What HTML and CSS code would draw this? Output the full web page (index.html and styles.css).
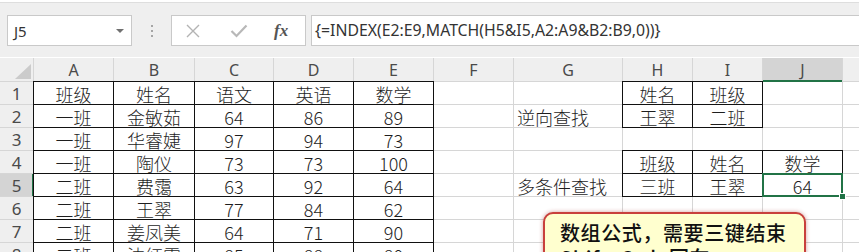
FILE: index.html
```html
<!DOCTYPE html>
<html lang="zh">
<head>
<meta charset="utf-8">
<link rel="stylesheet" href="styles.css">
</head>
<body>
<div class="toolbar">
  <div class="namebox"><span class="ref">J5</span><span class="caret"></span></div>
  <div class="grip"><i></i><i></i><i></i></div>
  <div class="btns">
    <svg class="ico" width="16" height="16" viewBox="0 0 16 16"><path d="M2 2 L14 14 M14 2 L2 14" stroke="#b3b3b3" stroke-width="1.4" fill="none"/></svg>
    <svg class="ico" width="18" height="14" viewBox="0 0 18 14"><path d="M1.5 7 L6.5 12 L16.5 1.5" stroke="#b8b8b8" stroke-width="2.2" fill="none"/></svg>
    <span class="fx">fx</span>
  </div>
  <div class="formula">{=INDEX(E2:E9,MATCH(H5&amp;I5,A2:A9&amp;B2:B9,0))}</div>
</div>
<div class="sheet">
  <div class="h corner"><span class="tri"></span></div>
  <div class="h">A</div><div class="h">B</div><div class="h">C</div><div class="h">D</div><div class="h">E</div><div class="h">F</div><div class="h">G</div><div class="h">H</div><div class="h">I</div><div class="h hl-col">J</div><div class="h"></div>

  <div class="h rh">1</div>
  <div class="c b">班级</div><div class="c b">姓名</div><div class="c b">语文</div><div class="c b">英语</div><div class="c b">数学</div>
  <div class="c"></div><div class="c"></div><div class="c b">姓名</div><div class="c b">班级</div><div class="c"></div><div class="c"></div>

  <div class="h rh">2</div>
  <div class="c b">一班</div><div class="c b">金敏茹</div><div class="c b">64</div><div class="c b">86</div><div class="c b">89</div>
  <div class="c"></div><div class="c l">逆向查找</div><div class="c b">王翠</div><div class="c b">二班</div><div class="c"></div><div class="c"></div>

  <div class="h rh">3</div>
  <div class="c b">一班</div><div class="c b">华睿婕</div><div class="c b">97</div><div class="c b">94</div><div class="c b">73</div>
  <div class="c"></div><div class="c"></div><div class="c"></div><div class="c"></div><div class="c"></div><div class="c"></div>

  <div class="h rh">4</div>
  <div class="c b">一班</div><div class="c b">陶仪</div><div class="c b">73</div><div class="c b">73</div><div class="c b">100</div>
  <div class="c"></div><div class="c"></div><div class="c b">班级</div><div class="c b">姓名</div><div class="c b">数学</div><div class="c"></div>

  <div class="h rh hl-row">5</div>
  <div class="c b">二班</div><div class="c b">费霭</div><div class="c b">63</div><div class="c b">92</div><div class="c b">64</div>
  <div class="c"></div><div class="c l">多条件查找</div><div class="c b">三班</div><div class="c b">王翠</div><div class="c sel">64</div><div class="c"></div>

  <div class="h rh">6</div>
  <div class="c b">二班</div><div class="c b">王翠</div><div class="c b">77</div><div class="c b">84</div><div class="c b">62</div>
  <div class="c"></div><div class="c"></div><div class="c"></div><div class="c"></div><div class="c"></div><div class="c"></div>

  <div class="h rh">7</div>
  <div class="c b">二班</div><div class="c b">姜凤美</div><div class="c b">64</div><div class="c b">71</div><div class="c b">90</div>
  <div class="c"></div><div class="c"></div><div class="c"></div><div class="c"></div><div class="c"></div><div class="c"></div>

  <div class="h rh">8</div>
  <div class="c b">二班</div><div class="c b">沈红霞</div><div class="c b">85</div><div class="c b">88</div><div class="c b">80</div>
  <div class="c"></div><div class="c"></div><div class="c"></div><div class="c"></div><div class="c"></div><div class="c"></div>
</div>
<div class="note">数组公式，需要三键结束<br>Shift+Ctrl+回车</div>
</body>
</html>
```
FILE: styles.css
```css
html, body {
  margin: 0;
  padding: 0;
  width: 859px;
  height: 252px;
  overflow: hidden;
  background: #fff;
}
body {
  position: relative;
  font-family: "Noto Sans CJK SC", "Noto Sans", sans-serif;
}
.toolbar {
  height: 55px;
  box-sizing: border-box;
  background: #efefef;
  border-top: 1px solid #dedede;
  margin-top: 2px;
  display: flex;
  align-items: flex-start;
  padding-top: 12px;
}
.namebox {
  margin-left: 7px;
  width: 125px;
  height: 31px;
  box-sizing: border-box;
  background: #fff;
  border: 1px solid #c9c9c9;
  display: flex;
  align-items: center;
  justify-content: space-between;
  padding: 0 7px 0 6px;
}
.ref {
  font-family: "Noto Sans", sans-serif;
  font-size: 15px;
  color: #333;
}
.caret {
  width: 0;
  height: 0;
  border-left: 4px solid transparent;
  border-right: 4px solid transparent;
  border-top: 4px solid #707070;
}
.grip {
  width: 39px;
  height: 31px;
  display: flex;
  flex-direction: column;
  align-items: center;
  justify-content: center;
  gap: 3px;
}
.grip i {
  display: block;
  width: 2px;
  height: 2px;
  background: #a5a5a5;
}
.btns {
  width: 135px;
  height: 31px;
  box-sizing: border-box;
  background: #fff;
  border: 1px solid #c9c9c9;
  display: flex;
  align-items: center;
  padding-left: 13px;
}
.ico { display: block; }
.btns .ico:first-child { margin-right: 29px; }
.btns .ico:nth-child(2) { margin-right: 26px; }
.fx {
  font-family: "Liberation Serif", serif;
  font-style: italic;
  font-weight: bold;
  font-size: 17px;
  color: #555;
}
.formula {
  flex: 1;
  margin-left: 5px;
  margin-right: -2px;
  height: 31px;
  box-sizing: border-box;
  background: #fff;
  border: 1px solid #c9c9c9;
  font-family: "Noto Sans", sans-serif;
  font-size: 15.8px;
  color: #333;
  line-height: 29px;
  padding-left: 3px;
  white-space: nowrap;
}
.sheet {
  margin-top: 1px;
  display: grid;
  grid-template-columns: 33px 79px 80px 78px 79px 79px 79px 108px 69px 69px 79px 1fr;
  grid-template-rows: 23px repeat(8, 22px);
  gap: 1px;
  background: #d6d6d6;
}
.h {
  background: #efefef;
  color: #4a4a4a;
  font-family: "Noto Sans", sans-serif;
  font-size: 16px;
  display: flex;
  align-items: center;
  justify-content: center;
  line-height: 1;
}
.corner {
  justify-content: flex-end;
  align-items: flex-end;
  padding: 0 2px 2px 0;
}
.tri {
  display: block;
  width: 16px;
  height: 15px;
  background: #cbcbcb;
  clip-path: polygon(100% 0, 100% 100%, 0 100%);
}
.rh { font-size: 17px; }
.hl-col {
  background: #d4d4d4;
  box-shadow: inset 0 -1px 0 #217346, 0 1px 0 #217346;
}
.hl-row {
  background: #d4d4d4;
  box-shadow: inset -1px 0 0 #217346;
}
.c {
  background: #fff;
  color: #1e1e1e;
  font-size: 18px;
  font-weight: 300;
  display: flex;
  align-items: center;
  justify-content: center;
  white-space: nowrap;
  line-height: 20px;
  padding-top: 1px;
}
.c.l {
  justify-content: flex-start;
  padding-left: 3px;
}
.b { box-shadow: 0 0 0 1px #111; }
.sel {
  position: relative;
  z-index: 2;
  box-shadow: 0 0 0 1px #217346, inset 0 0 0 1px #217346;
}
.sel::after {
  content: "";
  position: absolute;
  right: -4px;
  bottom: -4px;
  width: 5px;
  height: 5px;
  background: #217346;
  border: 1px solid #fff;
}
.note {
  position: absolute;
  left: 543px;
  top: 212px;
  width: 263px;
  height: 70px;
  box-sizing: border-box;
  background: #ffffcf;
  border: 2px solid #c8403c;
  border-radius: 10px;
  box-shadow: 0 0 4px rgba(160, 40, 40, 0.45);
  padding: 6px 0 0 15px;
  font-size: 20px;
  font-weight: 500;
  letter-spacing: 0.6px;
  line-height: 25px;
  color: #111;
  z-index: 5;
}
```
